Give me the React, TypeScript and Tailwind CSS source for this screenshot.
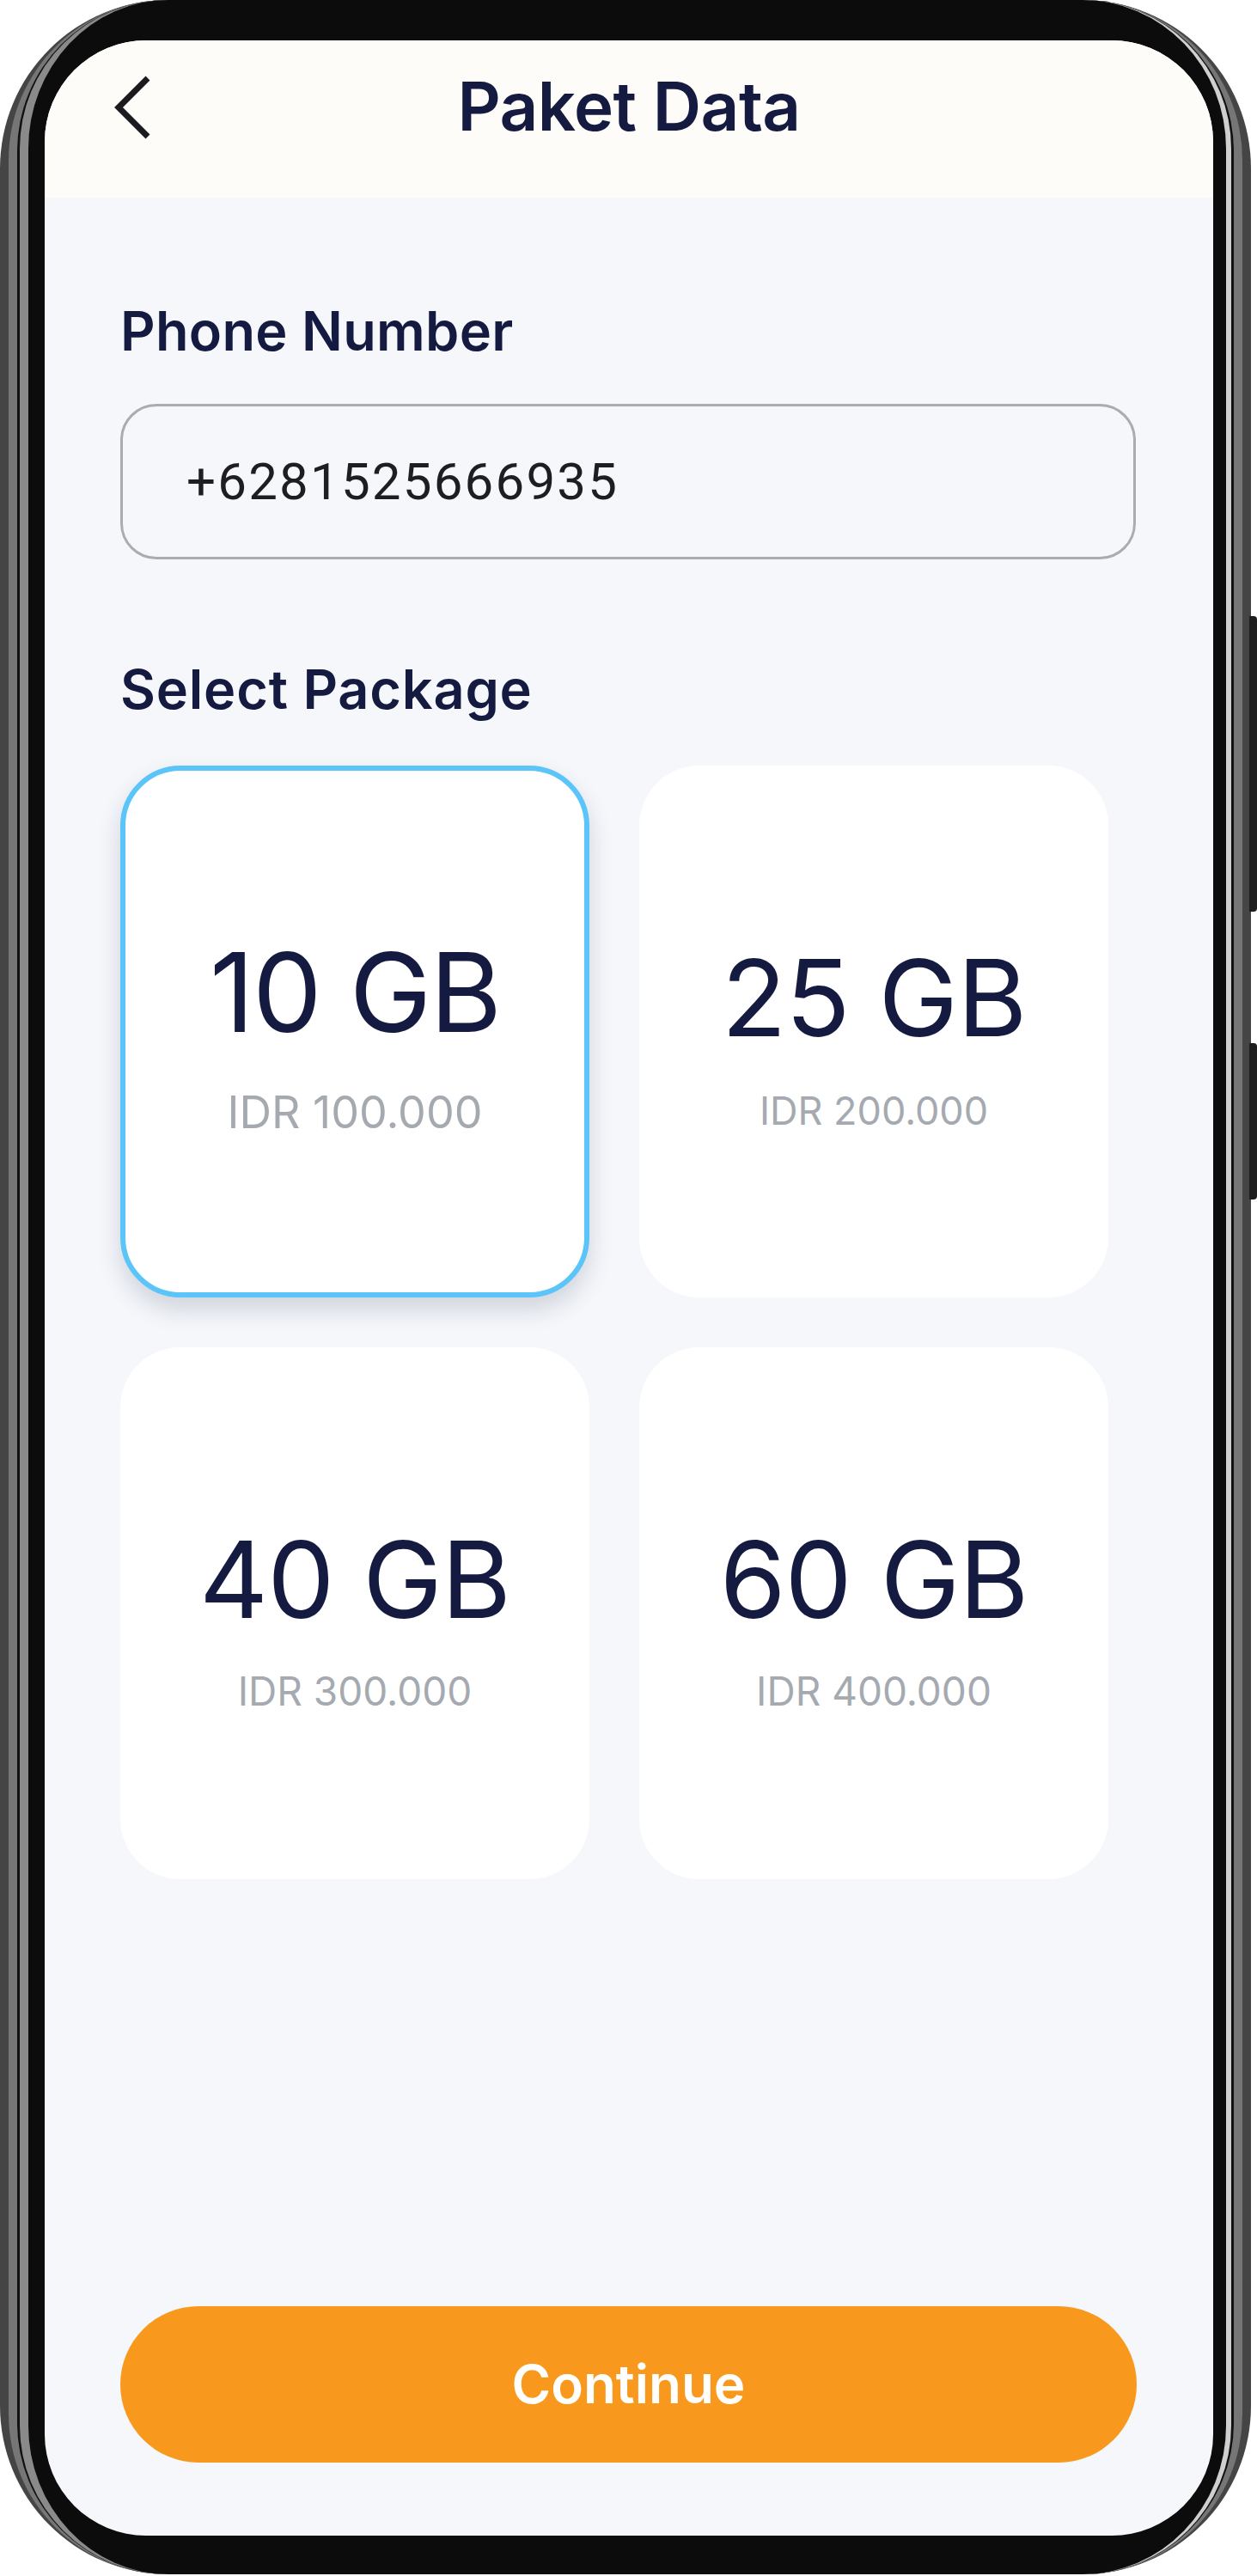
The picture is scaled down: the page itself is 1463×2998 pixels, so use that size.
import { useState } from "react";

interface PackageItem {
  size: string;
  price: string;
  sizeClass: string;
  priceClass: string;
}

const packages: PackageItem[] = [
  {
    size: "10 GB",
    price: "IDR 100.000",
    sizeClass: "text-[128px] tracking-[-2px]",
    priceClass: "text-[52px] mt-[50px]",
  },
  {
    size: "25 GB",
    price: "IDR 200.000",
    sizeClass: "text-[124px] tracking-[-1px]",
    priceClass: "text-[45px] mt-[47px]",
  },
  {
    size: "40 GB",
    price: "IDR 300.000",
    sizeClass: "text-[124px] tracking-[-1px]",
    priceClass: "text-[46px] mt-[45px]",
  },
  {
    size: "60 GB",
    price: "IDR 400.000",
    sizeClass: "text-[124px] tracking-[-1px]",
    priceClass: "text-[46px] mt-[45px]",
  },
];

function BackIcon() {
  return (
    <svg width="50" height="78" viewBox="0 0 50 78" fill="none">
      <polyline
        points="44,5 10,39 44,73"
        stroke="#1b1b1f"
        strokeWidth="7"
        strokeLinejoin="miter"
      />
    </svg>
  );
}

function PackageCard({
  item,
  selected,
  onSelect,
}: {
  item: PackageItem;
  selected: boolean;
  onSelect: () => void;
}) {
  return (
    <button
      onClick={onSelect}
      className={`h-[619px] rounded-[70px] bg-white flex flex-col items-center ${
        selected
          ? "border-[6px] border-[#5bc4f9] pt-[194px] shadow-[0_14px_28px_rgba(20,26,64,0.16)]"
          : "pt-[208px]"
      }`}
    >
      <span className={`leading-none text-[#141a40] font-normal ${item.sizeClass}`}>
        {item.size}
      </span>
      <span className={`leading-none text-[#a5aab1] ${item.priceClass}`}>
        {item.price}
      </span>
    </button>
  );
}

export default function App() {
  const [selected, setSelected] = useState(0);

  return (
    <div className="w-[1463px] h-[2998px] bg-white font-['Inter',sans-serif]">
      <div className="relative w-[1456px] h-[2996px] rounded-[196px] bg-[#121212] border-x-[10px] border-[#454545]">
        {/* side buttons */}
        <div className="absolute right-[-17px] top-[717px] w-[9px] h-[344px] rounded-r-[4px] bg-[#1e1e1e]" />
        <div className="absolute right-[-17px] top-[1214px] w-[9px] h-[182px] rounded-r-[4px] bg-[#1e1e1e]" />

        <div className="h-full rounded-[186px] border-x-[10px] border-[#767676]">
          <div className="h-full rounded-[176px] border-x-[3px] border-[#111]">
            <div className="h-full rounded-[173px] border-l-[10px] border-r-[6px] border-l-[#8a8a8a] border-r-[#cfcfcf] bg-[#0c0c0c] pt-[47px] pl-[19px] pr-[5px]">
              {/* screen */}
              <div className="w-[1360px] h-[2904px] rounded-[118px] overflow-hidden bg-[#f5f7fb] flex flex-col">
                <div className="h-[183px] bg-[#fdfcf9] pb-[29px] grid grid-cols-[220px_1fr_220px] items-center">
                  <div className="pl-[76px] pt-[2px] flex items-center">
                    <BackIcon />
                  </div>
                  <h1 className="text-center text-[78px] leading-none font-semibold text-[#141a40] tracking-[-0.5px]">
                    Paket Data
                  </h1>
                  <div />
                </div>

                <div className="flex-1 flex flex-col pl-[88px] pb-[85px]">
                  <p className="mt-[124px] text-[63px] leading-none font-semibold text-[#141a40] tracking-[0.3px]">
                    Phone Number
                  </p>
                  <div className="mt-[53px] w-[1182px] h-[181px] rounded-[42px] border-[3px] border-[#a9acb1] flex items-center pl-[74px]">
                    <span className="font-['Roboto',sans-serif] text-[60px] leading-none text-[#1d1d22] tracking-[2.2px]">
                      +6281525666935
                    </span>
                  </div>

                  <p className="mt-[120px] text-[63px] leading-none font-semibold text-[#141a40] tracking-[0.8px]">
                    Select Package
                  </p>

                  <div className="mt-[57px] w-[1150px] grid grid-cols-2 gap-[58px]">
                    {packages.map((item, i) => (
                      <PackageCard
                        key={item.size}
                        item={item}
                        selected={selected === i}
                        onSelect={() => setSelected(i)}
                      />
                    ))}
                  </div>

                  <button className="mt-auto w-[1183px] h-[182px] rounded-full bg-[#f8991d] text-white text-[62px] font-semibold leading-none">
                    Continue
                  </button>
                </div>
              </div>
            </div>
          </div>
        </div>
      </div>
    </div>
  );
}
